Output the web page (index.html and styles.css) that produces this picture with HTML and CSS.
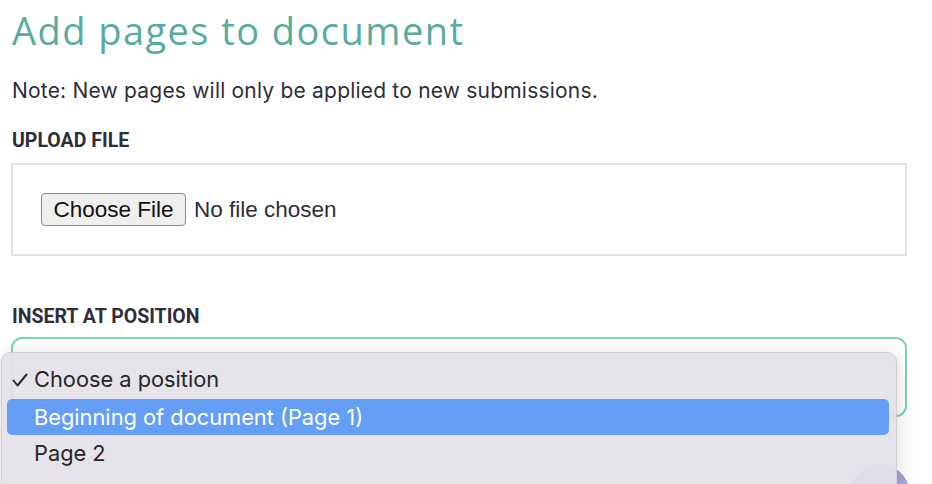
FILE: index.html
```html
<!DOCTYPE html>
<html lang="en">
<head>
<meta charset="utf-8">
<title>Add pages to document</title>
<link rel="stylesheet" href="styles.css">
</head>
<body>
<main class="page">
  <h1 class="title">Add pages to document</h1>
  <p class="note">Note: New pages will only be applied to new submissions.</p>
  <section class="field field-upload">
    <h2 class="label">UPLOAD FILE</h2>
    <div class="upload-box">
      <span class="file-btn">Choose File</span>
      <span class="file-name">No file chosen</span>
    </div>
  </section>
  <section class="field field-position">
    <h2 class="label">INSERT AT POSITION</h2>
    <div class="select-box"></div>
  </section>
</main>
<div class="chat-bubble"></div>
<ul class="menu">
  <li class="menu-item checked"><svg class="check" width="16" height="14" viewBox="0 0 16 14"><path d="M1.5 7.5 L5.5 12.5 L14.5 1.5" fill="none" stroke="#2a2a2a" stroke-width="2" stroke-linecap="round" stroke-linejoin="round"/></svg>Choose a position</li>
  <li class="menu-item active">Beginning of document (Page 1)</li>
  <li class="menu-item">Page 2</li>
</ul>
</body>
</html>
```
FILE: styles.css
```css
html, body {
  margin: 0;
  padding: 0;
  background: #ffffff;
  width: 932px;
  height: 484px;
  overflow: hidden;
}

.page {
  padding: 0 25px 0 11px;
  font-family: Roboto, "Liberation Sans", sans-serif;
  color: #2c2c3a;
}

.title {
  margin: 0;
  padding-top: 7px;
  padding-left: 1px;
  font-family: "Open Sans", sans-serif;
  font-weight: 500;
  font-size: 38px;
  line-height: 46px;
  letter-spacing: 1.45px;
  color: #5aab9f;
}

.note {
  margin: 26px 0 0 1px;
  font-family: Inter, Roboto, sans-serif;
  font-size: 21px;
  line-height: 24px;
  letter-spacing: 0.2px;
  color: #2e2e3b;
}

.label {
  margin: 0 0 0 1px;
  font-size: 19.5px;
  line-height: 22px;
  font-weight: 700;
  color: #2e2e3b;
}

.field-upload {
  margin-top: 27px;
}

.upload-box {
  margin-top: 11px;
  height: 89px;
  border: 2px solid #e4e4e4;
  display: flex;
  align-items: center;
  padding-left: 28px;
}

.file-btn {
  box-sizing: border-box;
  height: 33px;
  width: 145px;
  display: inline-flex;
  align-items: center;
  justify-content: center;
  border: 1.5px solid #8a8a8a;
  border-radius: 4px;
  background: #efefef;
  font-family: "Liberation Sans", Arial, sans-serif;
  font-size: 22.5px;
  color: #111;
}

.file-name {
  margin-left: 8px;
  font-family: "Liberation Sans", Arial, sans-serif;
  font-size: 22.5px;
  color: #2e2e3b;
}

.field-position {
  margin-top: 50px;
}

.select-box {
  margin-top: 9px;
  height: 76px;
  border: 2px solid #7dd0b9;
  border-radius: 11px;
}

.chat-bubble {
  position: absolute;
  left: 850px;
  top: 464px;
  width: 60px;
  height: 20px;
  background: radial-gradient(circle 30px at 30px 30px, #a3a6d8 98%, rgba(163, 166, 216, 0) 100%);
}

.menu {
  position: absolute;
  left: 1px;
  top: 352px;
  bottom: 0;
  width: 896px;
  margin: 0;
  padding: 8px 7px 0 5px;
  box-sizing: border-box;
  list-style: none;
  background: rgba(228, 226, 232, 0.93);
  border: 1px solid #d2d0d6;
  border-bottom: none;
  border-radius: 9px 9px 0 0;
  box-shadow: 0 4px 18px rgba(0, 0, 0, 0.16);
  font-family: Inter, "Noto Sans", sans-serif;
  font-size: 21.8px;
  color: #262626;
}

.menu-item {
  position: relative;
  height: 36px;
  line-height: 36px;
  padding-left: 27px;
  border-radius: 5px;
}

.menu-item.checked {
  margin-bottom: 2px;
}

.menu-item.active {
  background: #649ef6;
  color: #ffffff;
}

.check {
  position: absolute;
  left: 5px;
  top: 12px;
}
```
